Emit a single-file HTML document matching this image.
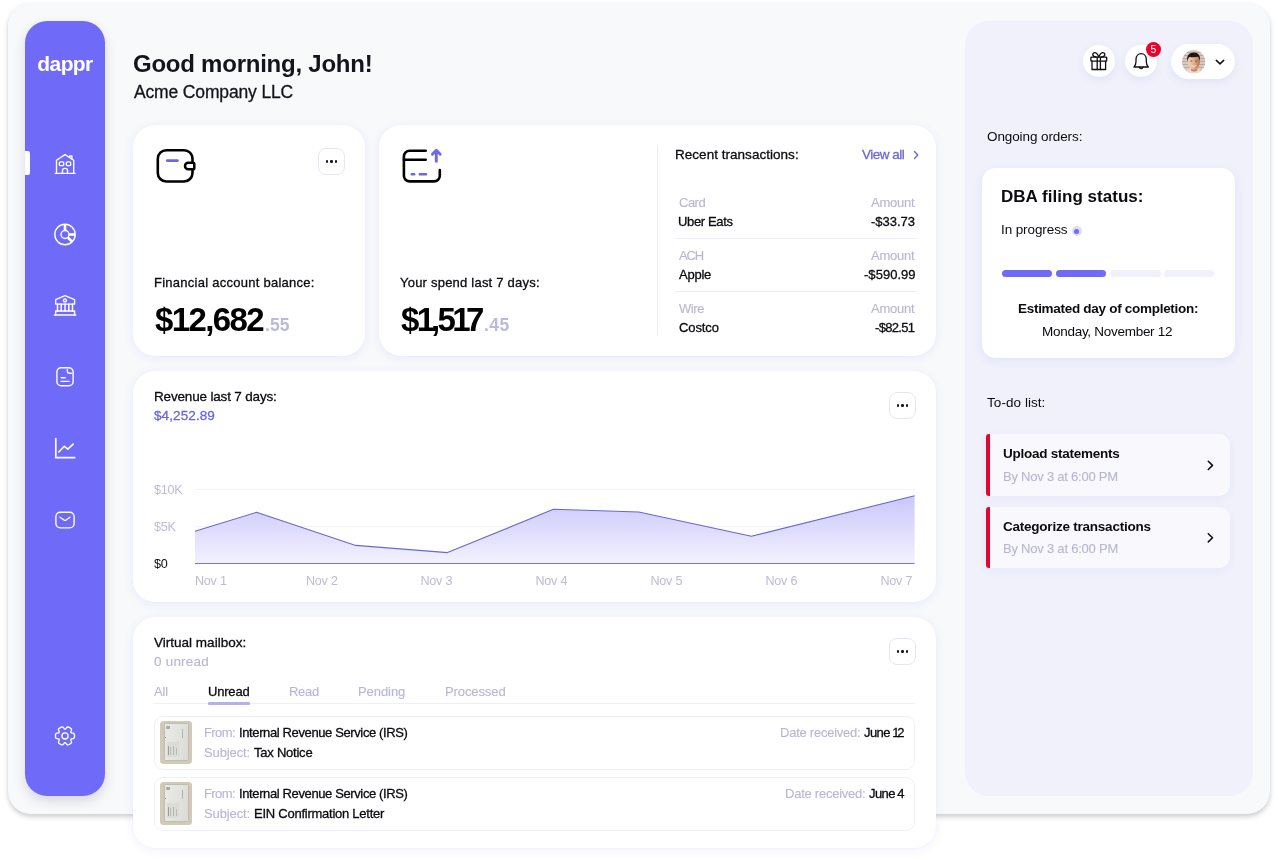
<!DOCTYPE html>
<html lang="en">
<head>
<meta charset="utf-8">
<title>dappr dashboard</title>
<style>
*{box-sizing:border-box;margin:0;padding:0}
html,body{width:1278px;height:860px;overflow:hidden;background:#fff}
body{font-family:"Liberation Sans",sans-serif;color:#0b0b10;position:relative;-webkit-font-smoothing:antialiased}
.abs{position:absolute}
h1,.sub,.t,.lbl,.big,.logo,.badge{will-change:transform}
.frame{position:absolute;left:8px;top:3px;width:1262px;height:811px;background:#f8f9fb;border-radius:23px;box-shadow:0 3px 5px rgba(20,20,30,.17),0 1px 4px rgba(20,20,30,.06)}
.side{position:absolute;left:25px;top:21px;width:80px;height:775px;background:#6f6af8;border-radius:22px;box-shadow:0 5px 12px rgba(50,50,70,.16)}
.logo{position:absolute;left:0;top:31px;width:80px;text-align:center;color:#fff;font-weight:700;font-size:21px;letter-spacing:-.6px}
.active{position:absolute;left:0;top:130px;width:4.5px;height:24px;background:#fff;border-radius:0 2px 2px 0}
h1{position:absolute;left:133px;top:49px;font-size:24px;line-height:30px;font-weight:700;letter-spacing:-.45px;color:#14141c;white-space:nowrap}
.sub{position:absolute;left:134px;top:81px;font-size:17.5px;line-height:22px;letter-spacing:-.1px;color:#14141c;white-space:nowrap}
.card{position:absolute;background:#fff;border-radius:22px;box-shadow:0 2px 10px rgba(110,106,248,.10),0 0 2px rgba(110,106,248,.06)}
.lbl{position:absolute;font-size:13px;line-height:16px;color:#0b0b10;white-space:nowrap;letter-spacing:-.1px}
.big{position:absolute;font-size:33px;line-height:36px;font-weight:700;letter-spacing:-1.6px;color:#000;white-space:nowrap}
.big.dec{font-size:17.5px;color:#bcbadb;letter-spacing:-.2px;padding-top:5.2px}
.dots{position:absolute;width:27px;height:27px;border:1px solid #e6e6f2;border-radius:8px;background:#fff}
.dots i{position:absolute;top:11.2px;width:2.6px;height:2.6px;border-radius:50%;background:#15151d}
.t,.lbl,.sub{-webkit-text-stroke:.3px currentColor}
.t.ns{-webkit-text-stroke:0}
.muted{color:#b8b6d2;-webkit-text-stroke:.12px currentColor}
.t{position:absolute;font-size:13px;line-height:16px;white-space:nowrap;letter-spacing:-.1px}
.r{text-align:right}
.hr{position:absolute;height:1px;background:#efeff7}
.panel{position:absolute;left:965px;top:21px;width:288px;height:775px;background:#f0f1fb;border-radius:24px}
.circ{position:absolute;background:#fff;border-radius:50%;box-shadow:0 3px 8px rgba(100,100,170,.09)}
.mail{position:absolute;left:154px;width:761px;height:53.5px;border:1px solid #efeff8;border-radius:9px;background:#fff}
.thumb{position:absolute;left:160px;width:32px;height:43px;border-radius:3.5px;background:#cfcbb8;overflow:hidden}
.thumb b{position:absolute;left:5px;top:3.2px;width:23px;height:36px;background:linear-gradient(100deg,#e9e9e6,#e2e2df 60%,#d9d9d4);box-shadow:0 0 1.5px rgba(60,60,40,.35)}
.thumb b i{position:absolute;display:block}
.thumb b .lg{left:1.2px;top:1.8px;width:3.4px;height:2.6px;background:#6a6a6c;border-radius:.8px;opacity:.5}
.thumb b .vl{left:16.8px;top:4.6px;width:1px;height:9px;background:#77777a;opacity:.45}
.thumb b .win{left:2.2px;top:17.8px;width:11.8px;height:14.6px;background:#dcdcd7;box-shadow:0 0 .5px rgba(0,0,0,.25)}
.thumb b .t1{left:3.2px;top:21.5px;width:1.3px;height:9.5px;background:#5d5d60;opacity:.5}
.thumb b .t2{left:5.2px;top:23px;width:.8px;height:8px;background:#8d8d90;opacity:.4}
.thumb b .t3{left:8px;top:21.5px;width:.9px;height:9.5px;background:#7a7a7d;opacity:.4}
.thumb b .t4{left:10.5px;top:23.5px;width:.9px;height:7.5px;background:#8a8a8d;opacity:.4}
.thumb b .dt{left:.2px;top:13px;width:.9px;height:.9px;background:#555;border-radius:50%}
.badge{position:absolute;width:15px;height:15px;border-radius:50%;background:#e6032f;color:#fff;font-size:10.5px;line-height:15px;text-align:center}
.dba{position:absolute;left:982px;top:168px;width:253px;height:190px;background:#fff;border-radius:14px;box-shadow:0 3px 10px rgba(110,106,248,.10)}
.bar{position:absolute;top:270px;width:50.300px;height:7px;border-radius:4px;background:#f1f1fb}
.bar.on{background:#6f6bf7}
.todo{position:absolute;left:986px;width:244.300px;height:61.600px;background:#f8f8fd;border-radius:3px 11px 11px 3px;border-left:4px solid #e6032f;box-shadow:0 3px 8px rgba(110,106,248,.07)}
</style>
</head>
<body>
<div class="frame"></div>

<!-- sidebar -->
<div class="side">
  <div class="logo" id="logo">dappr</div>
  <div class="active"></div>
</div>


<!-- sidebar icons (page coordinates) -->
<svg class="abs" style="left:0;top:0" width="1278" height="860" viewBox="0 0 1278 860" fill="none" stroke="#fff" stroke-width="1.4" stroke-linecap="round" stroke-linejoin="round">
  <!-- home -->
  <g stroke-width="1.35">
    <path d="M55.2 173.4H75"/>
    <path d="M56.5 173.4V160.3L65 154.6L73.7 160.3V173.4"/>
    <path d="M69.6 157.3V156H71.9V159"/>
    <rect x="59.3" y="161.8" width="4.4" height="3.8" rx="1.2"/>
    <rect x="66.3" y="161.8" width="4.4" height="3.8" rx="1.2"/>
    <path d="M62.5 173.4V170.4a2.5 2 0 0 1 5 0V173.4"/>
  </g>
  <!-- pie -->
  <circle cx="65" cy="234.5" r="10.2"/>
  <circle cx="65" cy="234.5" r="4"/>
  <g stroke-width="2.6" stroke-linecap="butt">
    <path d="M65 224.6V230.4"/>
    <path d="M69.1 234.5H75"/>
    <path d="M67.9 237.5L72 241.6"/>
  </g>
  <!-- bank -->
  <g stroke-width="1.35">
    <path d="M55.7 304.1V299.7L65 295.7L74.6 299.7V304.1Z"/>
    <circle cx="65" cy="300.4" r="1.5"/>
    <path d="M57.5 304.1V311M61.2 304.1V311M65 304.1V311M68.8 304.1V311M72.5 304.1V311" stroke-width="1.5"/>
    <path d="M55.7 315V311H74.6V315"/>
    <path d="M54.3 315H75.8"/>
  </g>
  <!-- document -->
  <rect x="56.9" y="367.7" width="16.2" height="18.1" rx="4.2"/>
  <path d="M67.3 369.6V371a2.3 2.3 0 0 0 2.3 2.3H71.4"/>
  <path d="M61.3 377.7H65.2M61.1 381.4H69"/>
  <!-- chart -->
  <path d="M55.8 438.7V457.7H74.7" stroke-width="1.7"/>
  <path d="M58.8 452L64.3 446.3L67.8 449.2L73.2 444.1" stroke-width="1.6"/>
  <!-- mail -->
  <rect x="55.9" y="512.3" width="18.2" height="15.6" rx="4.4"/>
  <path d="M60 517.2L63.9 520Q65 520.8 66.1 520L70 517.2"/>
  <!-- gear -->
  <path d="M74.5 735.9L74.5 736.3L74.5 736.7L74.4 737.1L74.3 737.5L74.2 737.9L73.9 738.3L73.4 738.6L72.6 738.7L71.9 738.8L71.4 738.9L71.1 739.1L70.9 739.3L70.8 739.6L70.8 739.9L70.9 740.4L71.2 741.1L71.5 741.9L71.5 742.4L71.4 742.8L71.1 743.2L70.8 743.4L70.4 743.7L70.1 743.9L69.8 744.1L69.4 744.3L69.0 744.5L68.6 744.7L68.2 744.8L67.8 744.9L67.4 744.8L66.9 744.5L66.4 743.9L66.0 743.3L65.6 742.9L65.3 742.7L65.0 742.7L64.7 742.7L64.4 742.9L64.0 743.3L63.6 743.9L63.1 744.5L62.6 744.8L62.2 744.9L61.8 744.8L61.4 744.7L61.0 744.5L60.6 744.3L60.2 744.1L59.9 743.9L59.6 743.7L59.2 743.4L58.9 743.2L58.6 742.8L58.5 742.4L58.5 741.9L58.8 741.1L59.1 740.4L59.2 739.9L59.2 739.6L59.1 739.3L58.9 739.1L58.6 738.9L58.1 738.8L57.4 738.7L56.6 738.6L56.1 738.3L55.8 737.9L55.7 737.5L55.6 737.1L55.5 736.7L55.5 736.3L55.5 735.9L55.5 735.5L55.5 735.1L55.6 734.7L55.7 734.3L55.8 733.9L56.1 733.5L56.6 733.2L57.4 733.1L58.1 733.0L58.6 732.9L58.9 732.7L59.1 732.5L59.2 732.2L59.2 731.9L59.1 731.4L58.8 730.7L58.5 729.9L58.5 729.4L58.6 729.0L58.9 728.6L59.2 728.4L59.6 728.1L59.9 727.9L60.2 727.7L60.6 727.5L61.0 727.3L61.4 727.1L61.8 727.0L62.2 726.9L62.6 727.0L63.1 727.3L63.6 727.9L64.0 728.5L64.4 728.9L64.7 729.1L65.0 729.1L65.3 729.1L65.6 728.9L66.0 728.5L66.4 727.9L66.9 727.3L67.4 727.0L67.8 726.9L68.2 727.0L68.6 727.1L69.0 727.3L69.4 727.5L69.8 727.7L70.1 727.9L70.4 728.1L70.8 728.4L71.1 728.6L71.4 729.0L71.5 729.4L71.5 729.9L71.2 730.7L70.9 731.4L70.8 731.9L70.8 732.2L70.9 732.5L71.1 732.7L71.4 732.9L71.9 733.0L72.6 733.1L73.4 733.2L73.9 733.5L74.2 733.9L74.3 734.3L74.4 734.7L74.5 735.1L74.5 735.5Z" stroke-width="1.35"/>
  <circle cx="65" cy="735.9" r="3.05" stroke-width="1.35"/>
</svg>

<h1 id="h1" style=";letter-spacing:-0.24px">Good morning, John!</h1>
<div class="sub" id="sub" style=";letter-spacing:-0.15px">Acme Company LLC</div>

<!-- cards -->
<div class="card" id="c1" style="left:133px;top:125px;width:232px;height:231px"></div>
<div class="card" id="c2" style="left:379px;top:125px;width:557px;height:231px"></div>
<div class="card" id="c3" style="left:133px;top:371px;width:803px;height:231px"></div>
<div class="card" id="c4" style="left:133px;top:617px;width:803px;height:231px"></div>


<!-- card 1 content -->
<svg class="abs" style="left:0;top:0" width="1278" height="860" viewBox="0 0 1278 860" fill="none" stroke="#000" stroke-width="2.6" stroke-linecap="round" stroke-linejoin="round">
  <!-- wallet -->
  <rect x="157.8" y="150.2" width="34.7" height="31.3" rx="8.5"/>
  <path d="M167.2 160.6H177.5" stroke="#6c68e4"/>
  <path d="M188.3 162.7H192.900a1.400 1.400 0 0 1 1.400 1.400V167.900a1.400 1.400 0 0 1 -1.400 1.400H188.300a3.300 3.300 0 0 1 0 -6.600Z" fill="#fff" stroke-width="2.500"/>
  <!-- spend card -->
  <path d="M425.7 150.7H409.6a5.7 5.7 0 0 0 -5.7 5.7V175.7a5.7 5.7 0 0 0 5.7 5.7H434.1a5.7 5.7 0 0 0 5.7 -5.7V170"/>
  <path d="M403.9 159.7H425.7"/>
  <path d="M411.8 174.2H414.2M419.8 174.2H426" stroke="#6c68e4"/>
  <path d="M436.3 161.4V151M432.4 154.2L436.3 150.3L440.2 154.2" stroke="#6f6bf0" stroke-width="2.9"/>
</svg>
<div class="dots" style="left:318px;top:148px"><i style="left:6.6px"></i><i style="left:11.2px"></i><i style="left:15.8px"></i></div>
<div id="lbl1" class="lbl" style="left:154px;top:275px;letter-spacing:0.26px">Financial account balance:</div>
<div id="big1m" class="big" style="left:155px;letter-spacing:-1.62px;top:302px">$12,682</div><div id="big1d" class="big dec" style="left:265px;letter-spacing:0.05px;top:302px">.55</div>

<!-- card 2 content -->
<div id="lbl2" class="lbl" style="left:400px;top:275px;letter-spacing:0.22px">Your spend last 7 days:</div>
<div id="big2m" class="big" style="left:401px;letter-spacing:-3.52px;top:302px"><span style="letter-spacing:-2.5px">$</span><span style="letter-spacing:-4.3px">1</span><span style="letter-spacing:-2.6px">,</span><span style="letter-spacing:-3.7px">5</span><span style="letter-spacing:-4.5px">1</span>7</div><div id="big2d" class="big dec" style="left:484px;letter-spacing:0.5px;top:302px">.45</div>
<div class="abs" style="left:657px;top:146px;width:1px;height:189px;background:#ebebf5"></div>
<div class="t" id="rt" style="left:675px;top:146.500px;font-size:13.5px;letter-spacing:0.03px">Recent transactions:</div>
<div class="t" id="va" style="top:146.500px;font-size:13.5px;color:#6a67d8;letter-spacing:-0.5px;left:862px">View all</div>
<svg class="abs" style="left:912px;top:149px" width="8" height="12" viewBox="0 0 8 12" fill="none" stroke="#6a67d8" stroke-width="1.4" stroke-linecap="round" stroke-linejoin="round"><path d="M2.5 2.6L5.8 6L2.5 9.4"/></svg>

<div class="t muted" id="r1a" style="left:679px;top:194.6px;letter-spacing:-0.5px">Card</div>
<div class="t muted r" id="am1" style="right:364px;top:194.6px;letter-spacing:-0.22px">Amount</div>
<div class="t" id="r1b" style="top:214px;left:678px;letter-spacing:-0.36px">Uber Eats</div>
<div class="t r" id="r1c" style="right:363px;top:214px;letter-spacing:-0.03px">-$33.73</div>
<div class="hr" style="left:675px;top:238px;width:243px"></div>

<div class="t muted" id="r2a" style="left:679px;top:247.6px;letter-spacing:-1.2px">ACH</div>
<div class="t muted r" id="am2" style="top:247.6px;right:364px;letter-spacing:-0.22px">Amount</div>
<div class="t" id="r2b" style="left:679px;top:267px;letter-spacing:-0.25px">Apple</div>
<div class="t r" id="r2c" style="right:362px;top:267px;letter-spacing:0.04px">-$590.99</div>
<div class="hr" style="left:675px;top:291px;width:243px"></div>

<div class="t muted" id="r3a" style="left:679px;top:300.6px;letter-spacing:-0.43px">Wire</div>
<div class="t muted r" id="am3" style="top:300.6px;right:364px;letter-spacing:-0.22px">Amount</div>
<div class="t" id="r3b" style="left:679px;top:320px;letter-spacing:-0.1px">Costco</div>
<div class="t r" id="r3c" style="right:364px;top:320px;letter-spacing:-0.7px">-$82.51</div>


<!-- card 3: revenue -->
<div class="t" id="rev" style="left:154px;top:389px;font-size:13.5px;letter-spacing:-0.17px">Revenue last 7 days:</div>
<div class="t" id="revv" style="left:154px;top:408px;font-size:13.5px;color:#6a67d8;letter-spacing:0.1px">$4,252.89</div>
<div class="dots" style="left:889px;top:392px"><i style="left:6.6px"></i><i style="left:11.2px"></i><i style="left:15.8px"></i></div>
<svg class="abs" style="left:0;top:0" width="1278" height="860" viewBox="0 0 1278 860">
  <defs>
    <linearGradient id="ag" x1="0" y1="495" x2="0" y2="564" gradientUnits="userSpaceOnUse">
      <stop offset="0" stop-color="#c9c6fb"/>
      <stop offset="1" stop-color="#f3f2fe"/>
    </linearGradient>
  </defs>
  <path d="M195 489.5H915M195 526.5H915" stroke="#f2f2f8" stroke-width="1"/>
  <path d="M195 531.3L256.5 512.3L355.8 545.4L447.5 552.6L553.4 509.3L638.8 512L751.4 536.2L914.6 495.8V563.5H195Z" fill="url(#ag)"/>
  <path d="M195 531.3L256.5 512.3L355.8 545.4L447.5 552.6L553.4 509.3L638.8 512L751.4 536.2L914.6 495.8" fill="none" stroke="#6b67d6" stroke-width="1.1" stroke-linejoin="round"/>
  <path d="M195 563.5H914.6" stroke="#7a76d8" stroke-width="1.2"/>
  <g font-family="Liberation Sans, sans-serif" font-size="12.6" fill="#bdbbd5" letter-spacing="-0.25">
    <text x="154" y="493.800">$10K</text>
    <text x="154" y="531">$5K</text>
    <text x="154" y="568" fill="#0b0b10">$0</text>
    <text x="195" y="585">Nov 1</text>
    <text x="306" y="585">Nov 2</text>
    <text x="420.5" y="585">Nov 3</text>
    <text x="535.5" y="585">Nov 4</text>
    <text x="650.5" y="585">Nov 5</text>
    <text x="765.5" y="585">Nov 6</text>
    <text x="880.5" y="585">Nov 7</text>
  </g>
</svg>

<!-- card 4: mailbox -->
<div class="t" id="vm" style="left:154px;top:635px;font-size:13.5px;letter-spacing:0.01px">Virtual mailbox:</div>
<div class="t muted" id="unr" style="left:154px;top:654px;font-size:13.5px;letter-spacing:0.21px">0 unread</div>
<div class="dots" style="left:889px;top:638px"><i style="left:6.6px"></i><i style="left:11.2px"></i><i style="left:15.8px"></i></div>
<div class="t muted" id="tab1" style="left:154px;top:684px;letter-spacing:-0.1px">All</div>
<div class="t" id="tab2" style="left:208px;top:684px;letter-spacing:-0.2px">Unread</div>
<div class="t muted" id="tab3" style="top:684px;letter-spacing:-0.3px;left:289px">Read</div>
<div class="t muted" id="tab4" style="left:357.5px;top:684px;letter-spacing:-0.06px">Pending</div>
<div class="t muted" id="tab5" style="left:445px;top:684px;letter-spacing:-0.1px">Processed</div>
<div class="hr" style="left:154px;top:703px;width:761px;background:#efeff6"></div>
<div class="abs" style="left:208px;top:702.3px;width:41.5px;height:2.6px;background:#b4b1ea;border-radius:1px"></div>

<div class="mail" style="top:716px"></div>
<div class="mail" style="top:777px"></div>
<div class="thumb" style="top:721px"><b><i class="lg"></i><i class="vl"></i><i class="win"></i><i class="t1"></i><i class="t2"></i><i class="t3"></i><i class="t4"></i><i class="dt"></i></b></div>
<div class="thumb" style="top:782px"><b><i class="lg"></i><i class="vl"></i><i class="win"></i><i class="t1"></i><i class="t2"></i><i class="t3"></i><i class="t4"></i><i class="dt"></i></b></div>
<div class="t muted" id="m1f" style="top:724.8px;letter-spacing:-0.6px;left:204px">From:</div>
<div class="t" id="m1a" style="top:724.8px;left:239px;letter-spacing:-0.38px">Internal Revenue Service (IRS)</div>
<div class="t muted" id="m1s" style="top:744.8px;letter-spacing:-0.12px;left:204px">Subject:</div>
<div class="t" id="m1b" style="letter-spacing:-0.23px;top:744.8px;left:254px">Tax Notice</div>
<div class="t muted" id="m1d" style="left:779.5px;letter-spacing:-0.24px;top:724.8px">Date received:</div>
<div class="t" id="m1c" style="top:724.8px;letter-spacing:-0.6px;word-spacing:-0.5px;left:864px">June <span style="letter-spacing:-2.2px">1</span>2</div>
<div class="t muted" id="m2f" style="top:785.8px;letter-spacing:-0.6px;left:204px">From:</div>
<div class="t" id="m2a" style="top:785.8px;left:239px;letter-spacing:-0.38px">Internal Revenue Service (IRS)</div>
<div class="t muted" id="m2s" style="top:805.8px;letter-spacing:-0.12px;left:204px">Subject:</div>
<div class="t" id="m2b" style="letter-spacing:-0.25px;top:805.8px;left:254px">EIN Confirmation Letter</div>
<div class="t muted" id="m2d" style="left:784.5px;letter-spacing:-0.24px;top:785.8px">Date received:</div>
<div class="t" id="m2c" style="top:785.8px;letter-spacing:-0.6px;word-spacing:-0.5px;left:869px">June 4</div>

<!-- right panel -->
<div class="panel"></div>


<!-- header buttons -->
<div class="circ" style="left:1083px;top:45.4px;width:31.6px;height:31.6px"></div>
<div class="circ" style="left:1125.3px;top:45.4px;width:31.6px;height:31.6px"></div>
<div class="circ" style="left:1171.4px;top:43.6px;width:63.3px;height:35.2px;border-radius:18px"></div>
<svg class="abs" style="left:1181.800px;top:49.600px" width="23.400" height="23.400" viewBox="0 0 23.400 23.400">
  <defs>
    <clipPath id="avc"><circle cx="11.700" cy="11.700" r="11.700"/></clipPath>
    <linearGradient id="skin" x1="0" y1="0" x2="1" y2="0"><stop offset="0" stop-color="#f1d2bd"/><stop offset=".45" stop-color="#e5b594"/><stop offset="1" stop-color="#b9744a"/></linearGradient>
    <pattern id="brick" width="23.400" height="3" patternUnits="userSpaceOnUse"><rect width="23.400" height="3" fill="#d9cbc3"/><rect y="1.900" width="23.400" height="1.100" fill="#bfa89c"/></pattern>
  </defs>
  <g clip-path="url(#avc)">
    <rect width="23.400" height="23.400" fill="url(#brick)"/>
    <path d="M3.500 23.400C4 19.500 7 18.300 11.500 18.300C16 18.300 19.500 19.500 20.200 23.400Z" fill="#ead9cc"/>
    <path d="M9 15.500H15.300V20.500C13.500 21.800 10.800 21.800 9 20.500Z" fill="#c07f56"/>
    <ellipse cx="11.800" cy="12.600" rx="6" ry="7.400" fill="url(#skin)"/>
    <path d="M5.300 11.500C4.300 5.800 7.500 2.600 11.800 2.600C16.200 2.600 18.800 5.600 18 11.800C17.600 9.500 17 7.600 15.600 6.800C13 7.500 9.500 7.300 7.300 6.900C6.200 7.800 5.800 9.500 5.300 11.500Z" fill="#1f1512"/>
    <ellipse cx="9.300" cy="10.900" rx="1.200" ry=".5" fill="#5a3a2a" opacity=".8"/>
    <ellipse cx="14.200" cy="10.900" rx="1.200" ry=".5" fill="#5a3a2a" opacity=".8"/>
    <path d="M9.300 15.600Q11.800 17.400 14.400 15.600" fill="none" stroke="#fff" stroke-width=".9" opacity=".7"/>
  </g>
</svg>
<div class="badge" style="left:1145.8px;top:41.9px">5</div>
<svg class="abs" style="left:0;top:0" width="1278" height="860" viewBox="0 0 1278 860" fill="none" stroke="#111" stroke-width="1.3" stroke-linecap="round" stroke-linejoin="round">
  <!-- gift -->
  <rect x="1090.9" y="57.2" width="15.8" height="3.9" rx=".6"/>
  <path d="M1092 61.1V69.5H1105.6V61.1"/>
  <path d="M1097.2 57.2V69.5M1100.4 57.2V69.5"/>
  <path d="M1098.8 57c-1-2.6 -2.4 -4.4 -4 -4.400c-1.300 0 -2 1 -2 2c0 1.400 1.200 2.400 3.200 2.400M1098.800 57c1-2.600 2.400-4.400 4-4.400c1.300 0 2 1 2 2c0 1.400-1.200 2.400-3.200 2.400"/>
  <!-- bell -->
  <path d="M1134 67H1148.300C1146.700 65.600 1146.300 63.800 1146.300 61.500V59.500C1146.300 55.900 1144 53.700 1141.150 53.700C1138.300 53.700 1136 55.900 1136 59.500V61.500C1136 63.800 1135.600 65.600 1134 67Z"/>
  <path d="M1139.300 67.200a1.900 1.900 0 0 0 3.700 0"/>
  <!-- chevron -->
  <path d="M1216.300 60.400L1220 63.900L1223.700 60.400" stroke-width="1.5"/>
</svg>

<div class="t ns" id="oo" style="left:986.5px;top:129px;font-size:13.5px;letter-spacing:-0.1px">Ongoing orders:</div>
<div class="dba"></div>
<div class="t ns" id="dbat" style="left:1000.5px;top:187.300px;font-size:17px;line-height:20px;font-weight:700;letter-spacing:0.03px">DBA filing status:</div>
<div class="t ns" id="inp" style="left:1000.5px;top:222px;font-size:13.5px;letter-spacing:-0.1px">In progress</div>
<div class="abs" style="left:1071.5px;top:226px;width:10px;height:10px;border-radius:50%;background:#dddcfb"></div>
<div class="abs" style="left:1074px;top:228.500px;width:5px;height:5px;border-radius:50%;background:#6f6bf7"></div>
<div class="bar on" style="left:1002px"></div>
<div class="bar on" style="left:1056.200px"></div>
<div class="bar" style="left:1110.300px"></div>
<div class="bar" style="left:1164.200px"></div>
<div class="t ns" id="est" style="top:301px;font-size:13.5px;font-weight:700;letter-spacing:-0.29px;width:auto;text-align:left;left:1018px">Estimated day of completion:</div>
<div class="t ns" id="mon" style="top:323.500px;font-size:13.5px;letter-spacing:-0.28px;left:1041.5px;width:auto;text-align:left">Monday, November 12</div>

<div class="t ns" id="todo" style="left:987px;top:395px;font-size:13.5px;letter-spacing:0.06px">To-do list:</div>
<div class="todo" style="top:434.200px"></div>
<div class="todo" style="top:506.800px"></div>
<div class="t ns" id="td1" style="left:1003px;top:446px;font-size:13.5px;font-weight:700;letter-spacing:-0.25px">Upload statements</div>
<div class="t muted" id="td1b" style="left:1003px;top:468.500px;letter-spacing:-0.23px">By Nov 3 at 6:00 PM</div>
<div class="t ns" id="td2" style="left:1003px;top:518.500px;font-size:13.5px;font-weight:700;letter-spacing:-0.23px">Categorize transactions</div>
<div class="t muted" id="td2b" style="left:1003px;top:541px;letter-spacing:-0.22px">By Nov 3 at 6:00 PM</div>

<svg class="abs" style="left:0;top:0" width="1278" height="860" viewBox="0 0 1278 860" fill="none" stroke="#111" stroke-width="1.6" stroke-linecap="round" stroke-linejoin="round">
  <path d="M1208.300 461.300L1212.500 465.400L1208.300 469.500"/>
  <path d="M1208.300 533.700L1212.500 537.800L1208.300 541.900"/>
</svg>
</body>
</html>
